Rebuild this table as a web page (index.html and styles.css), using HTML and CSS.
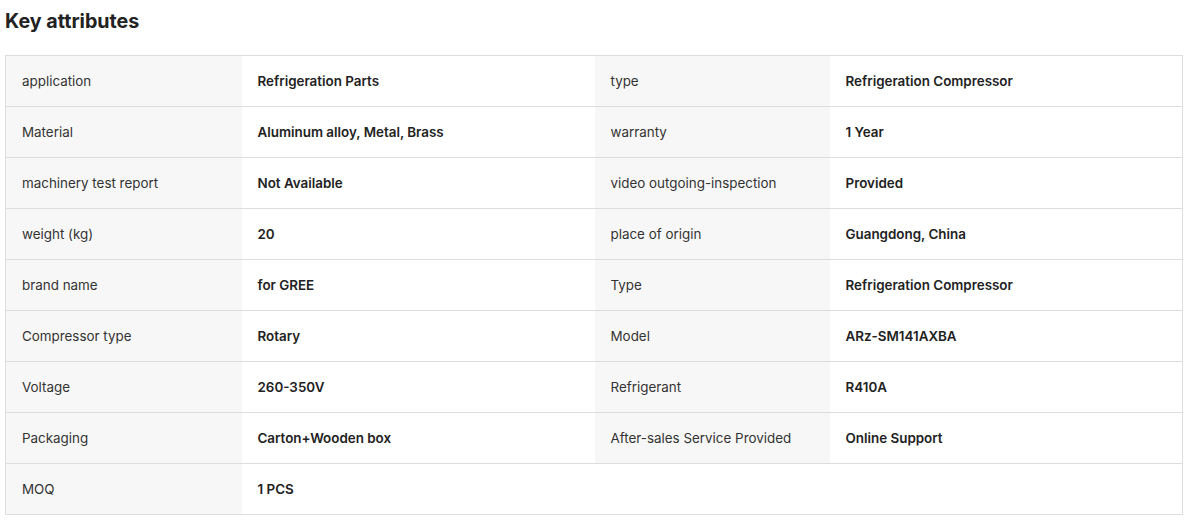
FILE: index.html
```html
<!DOCTYPE html>
<html lang="en">
<head>
    <meta charset="UTF-8">
    <title>Key attributes</title>
    <link rel="stylesheet" href="styles.css">
</head>
<body>
    <div class="attributes">
        <h3 class="attributes-title">Key attributes</h3>
        <table class="attr-table">
            <colgroup>
                <col class="col-label">
                <col class="col-value">
                <col class="col-label-narrow">
                <col class="col-value">
            </colgroup>
            <tr>
                <td class="attr-label">application</td>
                <td class="attr-value">Refrigeration Parts</td>
                <td class="attr-label">type</td>
                <td class="attr-value">Refrigeration Compressor</td>
            </tr>
            <tr>
                <td class="attr-label">Material</td>
                <td class="attr-value">Aluminum alloy, Metal, Brass</td>
                <td class="attr-label">warranty</td>
                <td class="attr-value">1 Year</td>
            </tr>
            <tr>
                <td class="attr-label">machinery test report</td>
                <td class="attr-value">Not Available</td>
                <td class="attr-label">video outgoing-inspection</td>
                <td class="attr-value">Provided</td>
            </tr>
            <tr>
                <td class="attr-label">weight (kg)</td>
                <td class="attr-value">20</td>
                <td class="attr-label">place of origin</td>
                <td class="attr-value">Guangdong, China</td>
            </tr>
            <tr>
                <td class="attr-label">brand name</td>
                <td class="attr-value">for GREE</td>
                <td class="attr-label">Type</td>
                <td class="attr-value">Refrigeration Compressor</td>
            </tr>
            <tr>
                <td class="attr-label">Compressor type</td>
                <td class="attr-value">Rotary</td>
                <td class="attr-label">Model</td>
                <td class="attr-value">ARz-SM141AXBA</td>
            </tr>
            <tr>
                <td class="attr-label">Voltage</td>
                <td class="attr-value">260-350V</td>
                <td class="attr-label">Refrigerant</td>
                <td class="attr-value">R410A</td>
            </tr>
            <tr>
                <td class="attr-label">Packaging</td>
                <td class="attr-value">Carton+Wooden box</td>
                <td class="attr-label">After-sales Service Provided</td>
                <td class="attr-value">Online Support</td>
            </tr>
            <tr>
                <td class="attr-label">MOQ</td>
                <td class="attr-value">1 PCS</td>
                <td class="attr-empty"></td>
                <td class="attr-empty"></td>
            </tr>
        </table>
    </div>
</body>
</html>
```

FILE: styles.css
```css
* {
    margin: 0;
    padding: 0;
    box-sizing: border-box;
}

body {
    font-family: 'Inter', 'Noto Sans', sans-serif;
    background: #ffffff;
    color: #222222;
}

.attributes {
    padding: 9px 7px 0 5px;
}

.attributes-title {
    font-size: 19.7px;
    font-weight: 700;
    line-height: 24px;
    color: #222222;
    margin-bottom: 22px;
}

.attr-table {
    width: 100%;
    border-collapse: collapse;
    table-layout: fixed;
    border: 1px solid #dddddd;
}

.col-label {
    width: 236px;
}

.col-label-narrow {
    width: 235px;
}

.col-value {
    width: 353px;
}

.attr-table td {
    height: 51px;
    padding: 0 16px;
    font-size: 13.4px;
    line-height: 18px;
    border-bottom: 1px solid #dddddd;
    vertical-align: middle;
}

.attr-label {
    background: #f7f7f7;
    color: #333333;
}

.attr-value {
    background: #ffffff;
    color: #222222;
    font-weight: 600;
}

.attr-empty {
    background: #ffffff;
}
```
